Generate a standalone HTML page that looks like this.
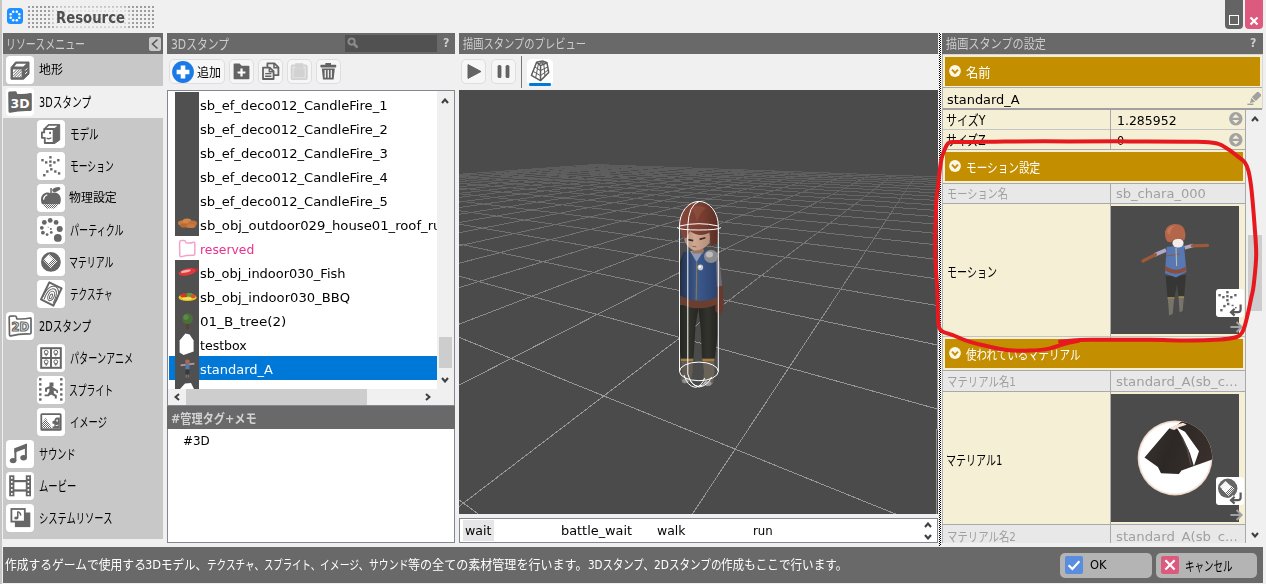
<!DOCTYPE html>
<html lang="ja"><head><meta charset="utf-8"><title>Resource</title>
<style>
html,body{margin:0;padding:0;}
body{width:1266px;height:584px;overflow:hidden;background:#f0f0f0;position:relative;font-family:"DejaVu Sans","Liberation Sans","Noto Sans CJK JP",sans-serif;}
#app{position:absolute;left:0;top:0;width:1266px;height:584px;overflow:hidden;}
#app div,#app svg,#app span.t{position:absolute;}
span.t{white-space:nowrap;transform-origin:0 50%;line-height:20px;height:20px;display:block;}
</style></head>
<body>
<div id="app"><svg width="0" height="0" style="left:0;top:0"><defs><pattern id="hatch" width="2" height="2" patternUnits="userSpaceOnUse"><rect width="1" height="1" fill="#666"/><rect x="1" y="1" width="1" height="1" fill="#666"/></pattern><pattern id="hw" width="2" height="2" patternUnits="userSpaceOnUse"><rect width="1" height="1" fill="#fff"/><rect x="1" y="1" width="1" height="1" fill="#fff"/></pattern><pattern id="chk" width="2" height="2" patternUnits="userSpaceOnUse"><rect width="1" height="1" fill="#000"/><rect x="1" y="1" width="1" height="1" fill="#000"/></pattern></defs></svg>
<div style="left:0px;top:0px;width:2px;height:584px;background:#c6c6c6;"></div><svg style="left:7px;top:8px" width="16" height="16" viewBox="0 0 16 16"><rect x="0" y="0" width="16" height="16" rx="3.5" fill="#1e90ff"/><circle cx="12.34" cy="9.80" r="1.25" fill="#fff"/><circle cx="9.80" cy="12.34" r="1.25" fill="#fff"/><circle cx="6.20" cy="12.34" r="1.25" fill="#fff"/><circle cx="3.66" cy="9.80" r="1.25" fill="#fff"/><circle cx="3.66" cy="6.20" r="1.25" fill="#fff"/><circle cx="6.20" cy="3.66" r="1.25" fill="#fff"/><circle cx="9.80" cy="3.66" r="1.25" fill="#fff"/><circle cx="12.34" cy="6.20" r="1.25" fill="#fff"/></svg>
<div style="left:27px;top:5px;width:127px;height:23px;background:transparent;background-image:radial-gradient(circle,#9c9c9c 0.9px,rgba(156,156,156,0) 1.25px);background-size:4px 4px;background-position:0 0;"></div>
<div style="left:54px;top:9px;width:73px;height:17px;background:rgba(240,240,240,.82);border-radius:6px;box-shadow:0 0 4px 3px rgba(240,240,240,.82);"></div><span class="t" style="left:56px;top:8.1px;font-size:16px;color:#505050;font-weight:bold;transform:scaleX(0.8282);font-family:"Liberation Sans",sans-serif;letter-spacing:-0.3px;">Resource</span>
<div style="left:1225px;top:0px;width:18px;height:29px;background:#646464;border-radius:0 0 4px 4px;"></div>
<div style="left:1229px;top:15px;width:8px;height:8px;background:transparent;border:1px solid #fff;"></div>
<div style="left:1245px;top:0px;width:18px;height:29px;background:#dc5a7d;border-radius:0 0 4px 4px;"></div><svg style="left:1249px;top:16px" width="10" height="10" viewBox="0 0 10 10"><path d="M1.5 1.5L8.5 8.5M8.5 1.5L1.5 8.5" stroke="#fff" stroke-width="2.2" stroke-linecap="butt"/></svg>
<div style="left:3px;top:33px;width:160px;height:21px;background:#696969;"></div>
<div style="left:167px;top:33px;width:288px;height:21px;background:#696969;"></div>
<div style="left:459px;top:33px;width:479px;height:21px;background:#696969;"></div>
<div style="left:942px;top:33px;width:321px;height:21px;background:#696969;"></div><span class="t" style="left:6px;top:34.0px;font-size:13.5px;color:#cdcdcd;transform:scaleX(0.7361);">リソースメニュー</span>
<div style="left:149px;top:37px;width:12px;height:14px;background:#c8c8c8;border-radius:2px;"></div><svg style="left:149px;top:37px" width="12" height="14" viewBox="0 0 12 14"><path d="M8.5 2.5L3.5 7L8.5 11.5" fill="none" stroke="#555" stroke-width="1.6"/></svg><span class="t" style="left:170.5px;top:34.0px;font-size:13.5px;color:#cdcdcd;transform:scaleX(0.7990);">3Dスタンプ</span>
<div style="left:345px;top:35px;width:92px;height:17px;background:#515151;"></div><svg style="left:347px;top:37px" width="12" height="12" viewBox="0 0 12 12"><circle cx="4.6" cy="4.6" r="3.1" fill="none" stroke="#8a8a8a" stroke-width="2"/><path d="M7 7L10.6 10.6" stroke="#8a8a8a" stroke-width="2.6"/></svg><span class="t" style="left:443px;top:33.0px;font-size:13px;color:#cdcdcd;font-weight:bold;transform:scaleX(0.8480);">?</span><span class="t" style="left:462.5px;top:34.0px;font-size:12.6px;color:#cdcdcd;transform:scaleX(0.8159);">描画スタンプのプレビュー</span><span class="t" style="left:945.5px;top:34.0px;font-size:12.6px;color:#cdcdcd;transform:scaleX(0.8852);">描画スタンプの設定</span><span class="t" style="left:1250px;top:33.0px;font-size:13px;color:#cdcdcd;font-weight:bold;transform:scaleX(0.8480);">?</span>
<div style="left:3px;top:54px;width:160px;height:485px;background:#c8c8c8;"></div>
<div style="left:3px;top:86px;width:160px;height:32px;background:#f0f0f0;"></div>
<div style="left:6px;top:56px;width:28px;height:28px;background:#fff;border-radius:4px;"></div><svg style="left:6px;top:56px" width="28" height="28" viewBox="0 0 28 28"><polygon points="5,11.5 9.5,6 23,6 23,18 17.5,23.2 5,23.2" fill="#666" stroke="#666" stroke-width="1" stroke-linejoin="round"/><polygon points="8.3,10.6 10.6,7.8 20.2,7.8 17.2,10.6" fill="#fff"/><rect x="7" y="13.4" width="8.6" height="7.8" fill="#fff"/><path d="M7 17.5L11 13.4M7 20.3L13.8 13.4M8.5 21.2L15.6 14M11.3 21.2L15.6 16.8M14 21.2L15.6 19.6" stroke="#666" stroke-width="1"/><path d="M19.2 14.6L21.2 12.4M19.2 18L21.2 15.8" stroke="#fff" stroke-width="1"/></svg><span class="t" style="left:38.6px;top:60.0px;font-size:12px;color:#000;transform:scaleX(0.9952);">地形</span>
<div style="left:6px;top:88px;width:28px;height:28px;background:#fff;border-radius:4px;"></div><svg style="left:6px;top:88px" width="28" height="28" viewBox="0 0 28 28"><path d="M2.2 5.2Q2 3.4 3.6 3.4L9 3.2Q10.6 3.1 10.8 4.6L11 5.8Q18 6.6 24.4 5Q25.8 4.8 25.8 6.2L25.8 21.6Q25.8 22.8 24.6 23Q14 22.4 4.4 24.8Q2.6 25.2 2.5 23.4Z" fill="#666"/><text x="14" y="19.6" font-family="DejaVu Sans,Liberation Sans,sans-serif" font-weight="bold" font-size="12.5" fill="#fff" text-anchor="middle" textLength="19" lengthAdjust="spacingAndGlyphs">3D</text></svg><span class="t" style="left:38.6px;top:92.0px;font-size:13.5px;color:#000;transform:scaleX(0.7191);">3Dスタンプ</span>
<div style="left:37px;top:120px;width:28px;height:28px;background:#fff;border-radius:4px;"></div><svg style="left:37px;top:120px" width="28" height="28" viewBox="0 0 28 28"><polygon points="6.8,9 11.2,4.6 22.7,4.6 22.7,20 17.2,23.8 17.2,9" fill="#666" stroke="#666" stroke-width="1" stroke-linejoin="round"/><polygon points="9.6,8 12,5.7 20.5,5.7 17.6,8" fill="#fff"/><path d="M7.2 9.2H16.6V23H7.8V17.8H4.9V12.4H7.2Z" fill="#fff" stroke="#666" stroke-width="1.8" stroke-linejoin="round"/><rect x="12.2" y="11.8" width="1.8" height="2.2" fill="#666"/><path d="M9.6 18Q12 19.6 14.4 17.8" fill="none" stroke="#666" stroke-width="1.3"/></svg><span class="t" style="left:69.8px;top:124.0px;font-size:13.5px;color:#000;transform:scaleX(0.7062);">モデル</span>
<div style="left:37px;top:152px;width:28px;height:28px;background:#fff;border-radius:4px;"></div><svg style="left:37px;top:152px" width="28" height="28" viewBox="0 0 28 28"><rect x="12.2" y="4.1" width="2.4" height="2.4" fill="#666"/><rect x="4.3" y="7.0" width="2.4" height="2.4" fill="#666"/><rect x="20.1" y="7.0" width="2.4" height="2.4" fill="#666"/><rect x="8.0" y="9.2" width="2.4" height="2.4" fill="#666"/><rect x="12.2" y="8.4" width="2.4" height="2.4" fill="#666"/><rect x="16.2" y="9.2" width="2.4" height="2.4" fill="#666"/><rect x="12.2" y="12.2" width="2.4" height="2.4" fill="#666"/><rect x="13.1" y="16.1" width="2.4" height="2.4" fill="#666"/><rect x="9.1" y="18.3" width="2.4" height="2.4" fill="#666"/><rect x="17.1" y="18.3" width="2.4" height="2.4" fill="#666"/><rect x="6.1" y="22.0" width="2.4" height="2.4" fill="#666"/><rect x="20.9" y="20.2" width="2.4" height="2.4" fill="#666"/></svg><span class="t" style="left:69.8px;top:156.0px;font-size:13.5px;color:#000;transform:scaleX(0.6500);">モーション</span>
<div style="left:37px;top:184px;width:28px;height:28px;background:#fff;border-radius:4px;"></div><svg style="left:37px;top:184px" width="28" height="28" viewBox="0 0 28 28"><path d="M13.9 9.4C10 7 4 9.5 4 15.5C4 21 8 25 11.5 24.6Q13.9 24 16.3 24.6C20 25 23.8 21 23.8 15.5C23.8 9.5 18 7 13.9 9.4Z" fill="#666"/><rect x="3" y="20.2" width="22" height="5" fill="#fff"/><path d="M6.3 20.2H21.6C20 23.4 17.8 24.9 16.3 24.6Q13.9 24 11.5 24.6C10 24.9 7.8 23.4 6.3 20.2Z" fill="url(#hatch)"/><rect x="13.3" y="4" width="1.5" height="6" fill="#666"/><ellipse cx="19.3" cy="5.4" rx="4.2" ry="2.1" transform="rotate(-18 19.3 5.4)" fill="#666"/><path d="M6.6 15.2Q7 12 9.8 11" fill="none" stroke="#fff" stroke-width="1.3" stroke-linecap="round"/></svg><span class="t" style="left:69px;top:188.0px;font-size:12px;color:#000;transform:scaleX(0.9955);">物理設定</span>
<div style="left:37px;top:216px;width:28px;height:28px;background:#fff;border-radius:4px;"></div><svg style="left:37px;top:216px" width="28" height="28" viewBox="0 0 28 28"><circle cx="7.3" cy="6.4" r="2.4" fill="#666"/><circle cx="13.2" cy="4.4" r="2.4" fill="#666"/><circle cx="19.1" cy="6.4" r="2.4" fill="#666"/><circle cx="22.7" cy="12.9" r="3" fill="#666"/><circle cx="20.8" cy="21.9" r="3.9" fill="#666"/><circle cx="4.8" cy="11.8" r="1.9" fill="#666"/><circle cx="5.9" cy="16.7" r="1.9" fill="#666"/><circle cx="10.1" cy="18.6" r="1.4" fill="#666"/><circle cx="14.3" cy="16.4" r="1.4" fill="#666"/><circle cx="13.9" cy="12.9" r="1" fill="#666"/><circle cx="11.2" cy="11.2" r="0.5" fill="#666"/></svg><span class="t" style="left:69.8px;top:220.0px;font-size:13.5px;color:#000;transform:scaleX(0.6730);">パーティクル</span>
<div style="left:37px;top:248px;width:28px;height:28px;background:#fff;border-radius:4px;"></div><svg style="left:37px;top:248px" width="28" height="28" viewBox="0 0 28 28"><circle cx="13.9" cy="13.9" r="9.9" fill="#666"/><polygon points="11.6,6.6 16,11 11.6,15.4 7.2,11" fill="#fff" opacity=".9"/><polygon points="12,6 20.5,13 14,20.5 6.4,12.4" fill="url(#hw)"/></svg><span class="t" style="left:69px;top:252.0px;font-size:13.5px;color:#000;transform:scaleX(0.6605);">マテリアル</span>
<div style="left:37px;top:280px;width:28px;height:28px;background:#fff;border-radius:4px;"></div><svg style="left:37px;top:280px" width="28" height="28" viewBox="0 0 28 28"><polygon points="12.3,2.4 24.6,8.4 16.4,25.6 4,19.4" fill="#fff" stroke="#666" stroke-width="2" stroke-linejoin="round"/><g fill="none" stroke="#666" stroke-width="1" transform="rotate(25 14.6 15)"><ellipse cx="14.6" cy="16.5" rx="1.2" ry="2.6"/><ellipse cx="14.6" cy="16" rx="3" ry="5"/><path d="M9.6 22C8.6 12 12 8.4 14.6 8.4C17.4 8.4 20 12 19.4 22"/><path d="M7.6 20C7 10 11 5.8 14.6 5.8C18 5.8 22 10 21.4 19"/></g></svg><span class="t" style="left:69.8px;top:284.0px;font-size:13.5px;color:#000;transform:scaleX(0.6361);">テクスチャ</span>
<div style="left:6px;top:312px;width:28px;height:28px;background:#fff;border-radius:4px;"></div><svg style="left:6px;top:312px" width="28" height="28" viewBox="0 0 28 28"><path d="M3.2 5.4Q3 4.2 4.4 4.2L9 4Q10.2 3.9 10.4 5L10.8 6.8Q18 7.4 24 6Q25 5.8 25 7L25 20.8Q25 21.8 24 22Q14 21.6 5 23.8Q3.6 24.1 3.5 22.8Z" fill="#fff" stroke="#666" stroke-width="1.7" stroke-linejoin="round"/><text x="14.2" y="19.4" font-family="DejaVu Sans,Liberation Sans,sans-serif" font-weight="bold" font-size="11.5" fill="#fff" stroke="#666" stroke-width="1.15" text-anchor="middle" textLength="17.5" lengthAdjust="spacingAndGlyphs">2D</text></svg><span class="t" style="left:38.6px;top:316.0px;font-size:13.5px;color:#000;transform:scaleX(0.7191);">2Dスタンプ</span>
<div style="left:37px;top:344px;width:28px;height:28px;background:#fff;border-radius:4px;"></div><svg style="left:37px;top:344px" width="28" height="28" viewBox="0 0 28 28"><rect x="4.2" y="4.2" width="19.6" height="19.6" fill="#fff" stroke="#666" stroke-width="2"/><path d="M14 4V24M4 14H24" stroke="#666" stroke-width="2"/><circle cx="9.2" cy="8.2" r="1.9" fill="none" stroke="#666" stroke-width="1"/><path d="M7.6 10.399999999999999H10.799999999999999M9.2 10.2V12.2" stroke="#666" stroke-width="1"/><circle cx="18.8" cy="8.2" r="1.9" fill="none" stroke="#666" stroke-width="1"/><path d="M17.2 10.399999999999999H20.400000000000002M18.8 10.2V12.2" stroke="#666" stroke-width="1"/><circle cx="9.2" cy="17.8" r="1.9" fill="none" stroke="#666" stroke-width="1"/><path d="M7.6 20.0H10.799999999999999M9.2 19.8V21.8" stroke="#666" stroke-width="1"/><circle cx="18.8" cy="17.8" r="1.9" fill="none" stroke="#666" stroke-width="1"/><path d="M17.2 20.0H20.400000000000002M18.8 19.8V21.8" stroke="#666" stroke-width="1"/></svg><span class="t" style="left:69.8px;top:348.0px;font-size:13.5px;color:#000;transform:scaleX(0.6755);">パターンアニメ</span>
<div style="left:37px;top:376px;width:28px;height:28px;background:#fff;border-radius:4px;"></div><svg style="left:37px;top:376px" width="28" height="28" viewBox="0 0 28 28"><rect x="2.1" y="2.1" width="2.4" height="2.4" fill="#666"/><rect x="2.1" y="7.2" width="2.4" height="2.4" fill="#666"/><rect x="2.1" y="12.2" width="2.4" height="2.4" fill="#666"/><rect x="2.1" y="17.3" width="2.4" height="2.4" fill="#666"/><rect x="2.1" y="22.3" width="2.4" height="2.4" fill="#666"/><rect x="23.1" y="2.1" width="2.4" height="2.4" fill="#666"/><rect x="23.1" y="7.2" width="2.4" height="2.4" fill="#666"/><rect x="23.1" y="12.2" width="2.4" height="2.4" fill="#666"/><rect x="23.1" y="17.3" width="2.4" height="2.4" fill="#666"/><rect x="23.1" y="22.3" width="2.4" height="2.4" fill="#666"/><path d="M12.5 6.5H16.5V10.5H14.8L18 12.5L21 14.5V17H19.4V15.6L16.8 14.6V17.5L19.8 19.2V22.4H17.8V20.4L14 18.6L11.6 20.2H7.6V18.4H10.6L12.4 15.6V12.4L10 13.4V15.8H8V12L12.5 10.2Z" fill="#666"/></svg><span class="t" style="left:69px;top:380.0px;font-size:13.5px;color:#000;transform:scaleX(0.6519);">スプライト</span>
<div style="left:37px;top:408px;width:28px;height:28px;background:#fff;border-radius:4px;"></div><svg style="left:37px;top:408px" width="28" height="28" viewBox="0 0 28 28"><rect x="3.4" y="5.2" width="21.2" height="17.6" rx="1.6" fill="#666"/><rect x="5.2" y="7" width="17.6" height="13.4" fill="#fff"/><polygon points="5.2,20.4 5.2,14.5 8.6,10 15.4,20.4" fill="url(#hatch)"/><path d="M22.8 9.4H19.6Q17.6 10 17.4 12.4L15.4 13.4V15.6L17.4 16V18.4H15.6V20.4H22.8Z" fill="#666"/><rect x="19.4" y="11.6" width="1.4" height="2" fill="#fff"/><path d="M18.6 17.4Q20 18 21.4 17" stroke="#fff" stroke-width=".9" fill="none"/></svg><span class="t" style="left:69.8px;top:412.0px;font-size:13.5px;color:#000;transform:scaleX(0.6886);">イメージ</span>
<div style="left:6px;top:440px;width:28px;height:28px;background:#fff;border-radius:4px;"></div><svg style="left:6px;top:440px" width="28" height="28" viewBox="0 0 28 28"><ellipse cx="7.1" cy="20.6" rx="3.3" ry="2.7" fill="#666"/><ellipse cx="17.6" cy="17.8" rx="3.3" ry="2.7" fill="#666"/><rect x="8.4" y="8.6" width="2" height="12" fill="#666"/><rect x="18.9" y="4" width="2" height="14" fill="#666"/><polygon points="8.4,8.2 20.9,3.4 20.9,8 8.4,12.8" fill="#666"/></svg><span class="t" style="left:38.6px;top:444.0px;font-size:13.5px;color:#000;transform:scaleX(0.6778);">サウンド</span>
<div style="left:6px;top:472px;width:28px;height:28px;background:#fff;border-radius:4px;"></div><svg style="left:6px;top:472px" width="28" height="28" viewBox="0 0 28 28"><rect x="3.2" y="3.3" width="5.2" height="21" fill="#666"/><rect x="19.8" y="3.3" width="5.2" height="21" fill="#666"/><rect x="8" y="8" width="12" height="2.2" fill="#666"/><rect x="8" y="17.4" width="12" height="2.2" fill="#666"/><rect x="5" y="5" width="1.6" height="1.8" fill="#fff"/><rect x="21.6" y="5" width="1.6" height="1.8" fill="#fff"/><rect x="5" y="9" width="1.6" height="1.8" fill="#fff"/><rect x="21.6" y="9" width="1.6" height="1.8" fill="#fff"/><rect x="5" y="13" width="1.6" height="1.8" fill="#fff"/><rect x="21.6" y="13" width="1.6" height="1.8" fill="#fff"/><rect x="5" y="17" width="1.6" height="1.8" fill="#fff"/><rect x="21.6" y="17" width="1.6" height="1.8" fill="#fff"/><rect x="5" y="21" width="1.6" height="1.8" fill="#fff"/><rect x="21.6" y="21" width="1.6" height="1.8" fill="#fff"/></svg><span class="t" style="left:38.6px;top:476.0px;font-size:13.5px;color:#000;transform:scaleX(0.6926);">ムービー</span>
<div style="left:6px;top:504px;width:28px;height:28px;background:#fff;border-radius:4px;"></div><svg style="left:6px;top:504px" width="28" height="28" viewBox="0 0 28 28"><rect x="8.9" y="8.5" width="15.4" height="14.6" fill="#666"/><rect x="5.4" y="5" width="13.4" height="12.6" fill="#fff" stroke="#666" stroke-width="1.8"/><ellipse cx="10.2" cy="14" rx="2" ry="1.6" fill="#666"/><rect x="11" y="7.6" width="1.5" height="6.6" fill="#666"/><path d="M11.6 7.6Q15 8.6 14.6 11.6" fill="none" stroke="#666" stroke-width="1.5"/></svg><span class="t" style="left:38.6px;top:508.0px;font-size:13.5px;color:#000;transform:scaleX(0.6865);">システムリソース</span>
<div style="left:169px;top:59px;width:56px;height:25px;background:#f5f5f5;background:#f6f6f6;border:1px solid #dedede;border-radius:5px;box-sizing:border-box;"></div><svg style="left:172px;top:61px" width="22" height="22" viewBox="0 0 22 22"><circle cx="11" cy="11" r="10.9" fill="#1a7ae6"/><path d="M11 4.6V17.4M4.6 11H17.4" stroke="#fff" stroke-width="4.6"/></svg><span class="t" style="left:197px;top:63.0px;font-size:12px;color:#000;transform:scaleX(0.9993);">追加</span>
<div style="left:229px;top:59px;width:25px;height:25px;background:#f5f5f5;background:#f6f6f6;border:1px solid #dedede;border-radius:5px;box-sizing:border-box;"></div><svg style="left:229.4px;top:59.4px" width="25" height="25" viewBox="0 0 25 25"><path d="M4.6 5.4Q4.6 4.6 5.4 4.6H10.6L12.6 6.8H19.6Q20.4 6.8 20.4 7.6V19.4Q20.4 20.2 19.6 20.2H5.4Q4.6 20.2 4.6 19.4Z" fill="#636363"/><path d="M12.5 9.6V17.4M8.6 13.5H16.4" stroke="#fff" stroke-width="2.2"/></svg>
<div style="left:258px;top:59px;width:25px;height:25px;background:#f5f5f5;background:#f6f6f6;border:1px solid #dedede;border-radius:5px;box-sizing:border-box;"></div><svg style="left:258.4px;top:59.4px" width="25" height="25" viewBox="0 0 25 25"><path d="M9.4 4.4H16.4L20.4 8.4V16.2H9.4Z" fill="#f0f0f0" stroke="#636363" stroke-width="1.8" stroke-linejoin="round"/><path d="M16 4.6V8.8H20.2" fill="none" stroke="#636363" stroke-width="1.6"/><path d="M5 8.6H11.8L15.6 12.4V20H5Z" fill="#f0f0f0" stroke="#636363" stroke-width="1.8" stroke-linejoin="round"/><path d="M11.4 8.8V12.8H15.4" fill="none" stroke="#636363" stroke-width="1.6"/><path d="M7.2 14.6H13.4M7.2 17.2H13.4" stroke="#636363" stroke-width="1.4"/></svg>
<div style="left:287px;top:59px;width:25px;height:25px;background:#f5f5f5;background:#f6f6f6;border:1px solid #dedede;border-radius:5px;box-sizing:border-box;"></div><svg style="left:287.4px;top:59.4px" width="25" height="25" viewBox="0 0 25 25"><rect x="4.6" y="6.4" width="15.2" height="13.8" rx="1" fill="#e2e2e2" stroke="#d2d2d2" stroke-width="1.8"/><rect x="8.2" y="4.2" width="8" height="5" fill="#d2d2d2"/><rect x="6.8" y="9.4" width="10.8" height="8.8" fill="#d2d2d2"/></svg>
<div style="left:316px;top:59px;width:25px;height:25px;background:#f5f5f5;background:#f6f6f6;border:1px solid #dedede;border-radius:5px;box-sizing:border-box;"></div><svg style="left:316.4px;top:59.4px" width="25" height="25" viewBox="0 0 25 25"><rect x="9.4" y="4" width="5.6" height="2.4" fill="#636363"/><rect x="4.4" y="5.8" width="15.8" height="2.6" rx=".6" fill="#636363"/><path d="M5.8 9.6H18.8L17.6 20.4H7Z" fill="#636363"/><path d="M9.3 11V18.8M12.3 11V18.8M15.3 11V18.8" stroke="#f0f0f0" stroke-width="1.3"/></svg>
<div style="left:167px;top:90px;width:288px;height:316px;background:#fff;border:1px solid #828790;box-sizing:border-box;"></div>
<div style="left:175px;top:92px;width:24px;height:144px;background:#505050;"></div>
<div style="left:175px;top:260px;width:24px;height:129px;background:#505050;"></div>
<div style="left:169px;top:356px;width:268px;height:24px;background:#0078d7;"></div>
<div style="left:175px;top:356px;width:24px;height:24px;background:#505050;"></div>
<div style="left:168px;top:91px;width:268.5px;height:298px;overflow:hidden;"><span class="t" style="left:32px;top:4.5px;font-size:13px;color:#000;transform:scaleX(1.0060);">sb_ef_deco012_CandleFire_1</span><span class="t" style="left:32px;top:28.5px;font-size:13px;color:#000;transform:scaleX(1.0076);">sb_ef_deco012_CandleFire_2</span><span class="t" style="left:32px;top:52.5px;font-size:13px;color:#000;transform:scaleX(1.0076);">sb_ef_deco012_CandleFire_3</span><span class="t" style="left:32px;top:76.5px;font-size:13px;color:#000;transform:scaleX(1.0076);">sb_ef_deco012_CandleFire_4</span><span class="t" style="left:32px;top:100.5px;font-size:13px;color:#000;transform:scaleX(1.0076);">sb_ef_deco012_CandleFire_5</span><span class="t" style="left:32px;top:124.5px;font-size:13px;color:#000;transform:scaleX(1.0154);">sb_obj_outdoor029_house01_roof_ru</span><span class="t" style="left:32px;top:148.5px;font-size:13px;color:#e8308c;transform:scaleX(0.9505);">reserved</span><span class="t" style="left:32px;top:172.5px;font-size:13px;color:#000;transform:scaleX(0.9988);">sb_obj_indoor030_Fish</span><span class="t" style="left:32px;top:196.5px;font-size:13px;color:#000;transform:scaleX(1.0095);">sb_obj_indoor030_BBQ</span><span class="t" style="left:32px;top:220.5px;font-size:13px;color:#000;transform:scaleX(1.0406);">01_B_tree(2)</span><span class="t" style="left:32px;top:244.5px;font-size:13px;color:#000;transform:scaleX(0.9656);">testbox</span><span class="t" style="left:32px;top:268.5px;font-size:13px;color:#fff;transform:scaleX(0.9991);">standard_A</span></div><svg style="left:175px;top:91px" width="24" height="298" viewBox="0 0 24 298"><g transform="translate(0 121)"><ellipse cx="7" cy="11" rx="4" ry="2.6" fill="#c87a40"/><ellipse cx="12" cy="9.6" rx="4.6" ry="3" fill="#d08848"/><ellipse cx="17.6" cy="11.4" rx="4.4" ry="2.8" fill="#c07038"/><ellipse cx="10" cy="13.4" rx="5" ry="2.2" fill="#b86a34"/><ellipse cx="16" cy="14" rx="4.6" ry="2" fill="#c87a40"/></g><g transform="translate(0 169) rotate(-12 12 12)"><ellipse cx="12.4" cy="12" rx="9" ry="3.4" fill="#e23a3a"/><ellipse cx="11" cy="11" rx="5" ry="1.2" fill="#f7b0b0"/><polygon points="20,12 23.4,9.4 23,14" fill="#c82c2c"/></g><g transform="translate(0 193)"><ellipse cx="12.6" cy="13.4" rx="9" ry="3.6" fill="#e8c81e"/><ellipse cx="9" cy="11.4" rx="3.6" ry="2.2" fill="#c83c28"/><ellipse cx="14.6" cy="10.8" rx="3" ry="2" fill="#58a03c"/><ellipse cx="18" cy="12.4" rx="2.6" ry="1.8" fill="#d85030"/><ellipse cx="12" cy="14.6" rx="5" ry="1.4" fill="#f4e060"/></g><g transform="translate(0 217)"><rect x="11.4" y="15" width="2.2" height="6.4" fill="#5e4228"/><circle cx="12.6" cy="10.6" r="5.4" fill="#4a7038"/><circle cx="11" cy="9.2" r="2.6" fill="#5c8a46"/></g><g transform="translate(0 241)"><polygon points="4.6,8.6 10.4,1.6 14.6,2.4 18.6,8.6 18.6,19.6 8.6,23 4.6,20.6" fill="#fff"/></g><g transform="translate(0 265)"><ellipse cx="12.4" cy="5.6" rx="2.4" ry="2.2" fill="#b06848"/><path d="M5.6 9.4L19.4 7.6" stroke="#b89a98" stroke-width="1.8"/><rect x="10.4" y="7.6" width="4" height="6" fill="#5878b0"/><rect x="10.4" y="13.4" width="4" height="5.4" fill="#3a3a38"/><rect x="10.6" y="18.6" width="1.4" height="3" fill="#77736a"/><rect x="12.8" y="18.6" width="1.4" height="3" fill="#77736a"/></g><g transform="translate(0 289)"><polygon points="5,9 10,3.4 16,3 19,9" fill="#fff"/></g></svg><svg style="left:176px;top:237px" width="22" height="22" viewBox="0 0 22 22"><path d="M3.6 5.4Q3.6 3.6 5.2 3.6H8Q9.2 3.6 9.6 4.8L10 5.8Q14 6.4 17.6 5.2Q18.8 5 18.8 6.2V17Q18.8 18 17.8 18.2Q11 18 5.4 19.6Q3.8 20 3.8 18.4Z" fill="#fff" stroke="#f4a2cc" stroke-width="1.5" stroke-linejoin="round"/></svg>
<div style="left:437px;top:91px;width:17px;height:298px;background:#f0f0f0;"></div>
<div style="left:438.5px;top:337px;width:13px;height:31px;background:#cdcdcd;"></div><svg style="left:441px;top:98px" width="8" height="6" viewBox="0 0 8 6"><path d="M1 5L4.0 1.5L7 5" fill="none" stroke="#404040" stroke-width="2.1"/></svg><svg style="left:441px;top:376.5px" width="8" height="6" viewBox="0 0 8 6"><path d="M1 1L4.0 4.5L7 1" fill="none" stroke="#404040" stroke-width="2.1"/></svg>
<div style="left:168px;top:389px;width:286px;height:16px;background:#f0f0f0;"></div>
<div style="left:186px;top:389px;width:181px;height:15.5px;background:#cdcdcd;"></div><svg style="left:173.5px;top:392.5px" width="6" height="8" viewBox="0 0 6 8"><path d="M5 1L1.5 4.0L5 7" fill="none" stroke="#404040" stroke-width="2.1"/></svg><svg style="left:424.5px;top:392.5px" width="6" height="8" viewBox="0 0 6 8"><path d="M1 1L4.5 4.0L1 7" fill="none" stroke="#404040" stroke-width="2.1"/></svg>
<div style="left:167px;top:406px;width:288px;height:23px;background:#696969;"></div><span class="t" style="left:171.3px;top:408.5px;font-size:12.6px;color:#d2d2d2;font-weight:bold;transform:scaleX(0.8865);">#管理タグ+メモ</span>
<div style="left:167px;top:429px;width:288px;height:114px;background:#fff;border:1px solid #828790;border-top:none;box-sizing:border-box;"></div><span class="t" style="left:183px;top:430.5px;font-size:13px;color:#000;transform:scaleX(0.9182);">#3D</span>
<div style="left:461px;top:59px;width:25px;height:25px;background:#f5f5f5;background:#f6f6f6;border:1px solid #dedede;border-radius:5px;box-sizing:border-box;"></div><svg style="left:461.4px;top:59.4px" width="25" height="25" viewBox="0 0 25 25"><polygon points="7,5.6 20,12.5 7,19.4" fill="#636363" stroke="#636363" stroke-width="1" stroke-linejoin="round"/></svg>
<div style="left:491px;top:59px;width:25px;height:25px;background:#f5f5f5;background:#f6f6f6;border:1px solid #dedede;border-radius:5px;box-sizing:border-box;"></div><svg style="left:491.3px;top:59.4px" width="25" height="25" viewBox="0 0 25 25"><rect x="6.6" y="6" width="3.8" height="13" rx="1.6" fill="#636363"/><rect x="14.6" y="6" width="3.8" height="13" rx="1.6" fill="#636363"/></svg>
<div style="left:520.8px;top:56px;width:1.3px;height:32px;background:#777;"></div>
<div style="left:527px;top:59px;width:26px;height:27px;background:#fff;border-radius:5px;"></div>
<div style="left:528.8px;top:83.4px;width:22.6px;height:2.4px;background:#0078d7;border-radius:1.2px;"></div><svg style="left:527px;top:59px" width="26" height="27" viewBox="0 0 26 27"><g fill="none" stroke="#5c5c5c" stroke-width="1.5" stroke-linejoin="round"><polygon points="9.6,3.2 15.6,1.9 20,3.8 21.7,13.5 13.5,21.6 4.4,16.4"/><path d="M9.6 3.2L13.6 6.6L20 3.8M13.6 6.6L13.5 21.6"/></g><g fill="none" stroke="#5c5c5c" stroke-width="1"><path d="M7.8 8L13.6 11.6L20.6 8M6.2 12.4L13.5 16.6L21.2 11"/><path d="M11.4 5L8.6 19M16.8 5.2L18 17.2M12.6 2.6L16.8 5.2M17.8 2.9L11.4 5"/></g></svg><svg style="left:459px;top:90px" width="479" height="424" viewBox="0 0 479 424"><rect width="479" height="424" fill="#4b4b4b"/><defs><linearGradient id="fade" x1="0" y1="0" x2="0" y2="1"><stop offset="0" stop-color="#4b4b4b" stop-opacity=".8"/><stop offset=".1" stop-color="#4b4b4b" stop-opacity=".72"/><stop offset=".3" stop-color="#4b4b4b" stop-opacity=".55"/><stop offset=".55" stop-color="#4b4b4b" stop-opacity=".36"/><stop offset=".8" stop-color="#4b4b4b" stop-opacity=".16"/><stop offset="1" stop-color="#4b4b4b" stop-opacity="0"/></linearGradient></defs><g stroke="#969696" stroke-width="1" fill="none" shape-rendering="crispEdges"><path d="M-594.9 127.2L135.9 74.5"/><path d="M-590.9 130.4L146.1 74.8"/><path d="M-596.9 134.8L156.7 75.2"/><path d="M-592.6 138.8L167.6 75.6"/><path d="M-599.4 144.2L178.9 76.0"/><path d="M-594.7 149.1L190.6 76.4"/><path d="M-589.4 154.7L202.7 76.9"/><path d="M-597.4 162.3L215.3 77.3"/><path d="M-591.5 169.5L228.3 77.8"/><path d="M-584.8 177.7L241.8 78.3"/><path d="M-594.3 189.4L255.9 78.8"/><path d="M-586.6 200.7L270.5 79.3"/><path d="M-598.2 217.4L285.7 79.9"/><path d="M-589.2 234.1L301.6 80.5"/><path d="M-578.2 254.7L318.1 81.1"/><path d="M-593.3 286.9L335.3 81.7"/><path d="M-579.2 322.3L353.2 82.3"/><path d="M-560.1 370.3L372.0 83.0"/><path d="M-545.4 123.6L-599.3 185.1"/><path d="M-581.3 457.7L391.6 83.7"/><path d="M-467.3 118.0L-196.6 1279.3"/><path d="M-550.4 576.4L412.2 84.5"/><path d="M-400.2 113.1L972.5 1130.8"/><path d="M-587.7 865.4L433.7 85.3"/><path d="M-342.1 108.9L1061.4 676.9"/><path d="M-356.9 1318.7L456.3 86.1"/><path d="M-291.1 105.2L1050.5 478.0"/><path d="M470.4 1264.5L480.1 86.9"/><path d="M-246.1 102.0L1044.8 374.7"/><path d="M1069.3 962.0L505.0 87.8"/><path d="M-206.0 99.1L1069.8 316.3"/><path d="M1071.2 503.6L531.4 88.8"/><path d="M-170.1 96.5L1062.7 272.1"/><path d="M1071.8 351.5L559.1 89.8"/><path d="M-137.8 94.2L1078.5 242.9"/><path d="M1072.1 275.5L588.4 90.9"/><path d="M-108.6 92.1L1072.0 218.5"/><path d="M1072.3 230.0L619.4 92.0"/><path d="M-82.0 90.2L1067.0 199.5"/><path d="M1072.4 199.6L652.3 93.2"/><path d="M-57.7 88.4L1077.8 185.6"/><path d="M1072.5 178.0L687.2 94.4"/><path d="M-35.4 86.8L1073.1 173.0"/><path d="M1072.6 161.7L724.3 95.8"/><path d="M-14.9 85.3L1069.2 162.5"/><path d="M1072.6 149.1L763.8 97.2"/><path d="M4.1 84.0L1077.4 154.4"/><path d="M1072.7 139.0L806.0 98.8"/><path d="M21.6 82.7L1073.7 146.7"/><path d="M1078.6 131.5L851.1 100.4"/><path d="M37.9 81.5L1070.5 140.0"/><path d="M1078.1 124.5L899.6 102.1"/><path d="M53.1 80.4L1077.1 134.7"/><path d="M1077.7 118.6L951.7 104.0"/><path d="M67.3 79.4L1074.1 129.5"/><path d="M1077.4 113.5L1007.8 106.1"/><path d="M80.6 78.4L1071.4 124.9"/><path d="M1077.1 109.1L1068.6 108.3"/><path d="M93.0 77.5L1076.9 121.2"/><path d="M104.7 76.7L1074.4 117.4"/><path d="M115.7 75.9L1072.1 114.1"/><path d="M126.1 75.2L1076.8 111.3"/><path d="M135.9 74.5L1074.6 108.5"/></g><rect x="0" y="70" width="479" height="190" fill="url(#fade)"/><g transform="translate(-459 -90)"><defs><linearGradient id="hairg" x1="0" x2="1"><stop offset="0" stop-color="#84463a"/><stop offset=".55" stop-color="#7a3e30"/><stop offset="1" stop-color="#5a2e26"/></linearGradient><linearGradient id="vestg" x1="0" x2="1"><stop offset="0" stop-color="#22324f"/><stop offset=".45" stop-color="#3d5a8e"/><stop offset="1" stop-color="#2b426e"/></linearGradient><linearGradient id="pantg" x1="0" x2="1"><stop offset="0" stop-color="#24241f"/><stop offset=".5" stop-color="#33332d"/><stop offset="1" stop-color="#252520"/></linearGradient><linearGradient id="faceg" x1="0" x2="1"><stop offset="0" stop-color="#a98672"/><stop offset=".4" stop-color="#cfa892"/><stop offset="1" stop-color="#b48c78"/></linearGradient></defs><path d="M683 254L679.8 262L679.2 298L683.6 300Z" fill="#2c2a30"/><path d="M679.5 305L699 305L695.6 326L693.6 358L680.6 358L678.6 335Z" fill="url(#pantg)"/><path d="M698 305L717.6 303L717.6 335L715 358L702 358L700.8 330Z" fill="url(#pantg)"/><path d="M681 359L693 359L692.6 372L691 381L684.4 384L680.6 380L682.6 372Z" fill="#625b52"/><path d="M702.5 359L714 359L714.6 372L713 384L706.4 386.4L703 382L704 372Z" fill="#6a635a"/><path d="M681 360H693M702.5 360H714.2" stroke="#b07c34" stroke-width="2.2"/><ellipse cx="685.4" cy="381" rx="3.4" ry="2.2" fill="#8c8c90"/><ellipse cx="708" cy="383.6" rx="3.6" ry="2.4" fill="#98989c"/><path d="M711 256L719.6 261L722.4 288L715.4 290Z" fill="#6f6a74"/><path d="M715.4 287L722.6 285.6L723.8 308L720 315L715.4 311Z" fill="#69392b"/><path d="M683 252L710 250L716 262L717.4 300L686 304L680.2 298L681.6 262Z" fill="url(#vestg)"/><path d="M690 251L696.6 262L704 250Z" fill="#8e9cb8"/><path d="M696.8 262L696.2 300" stroke="#8a7a4a" stroke-width="1.1"/><path d="M680.2 295.6Q698 305.6 717.5 297L717.6 304Q698 313 680.4 303.4Z" fill="#6b3f30"/><ellipse cx="711" cy="256.4" rx="7" ry="6.6" fill="#8c8c90"/><ellipse cx="709.4" cy="254.4" rx="3.6" ry="3" fill="#bcbcc0"/><circle cx="700.4" cy="267.4" r="2.8" fill="#c4c8d0"/><circle cx="699.8" cy="266.8" r="1.2" fill="#fff"/><rect x="692.4" y="245" width="11" height="8.4" fill="#9c7662"/><path d="M683.6 228L684.6 241Q688 249 695 250.6Q704 250 709.6 243L710.4 228Z" fill="url(#faceg)"/><path d="M688 239.6L693.2 240.6M699.6 239.4L705.4 237.8" stroke="#3e2822" stroke-width="1.7"/><path d="M692.6 246.4L696.4 246.8" stroke="#8a5c4c" stroke-width="1"/><path d="M680 228C679 210 688 202.6 699 202.6C711 202.6 719.4 212 718.6 228L717 243.6L711.4 246.4L709.4 232.6C703 236.6 694 235 690 231L686.4 238L682.4 237.6Z" fill="url(#hairg)"/><path d="M690 208Q698 204 706 208Q700 212 697 222Q695 212 690 208Z" fill="#8e5040" opacity=".7"/><g fill="none" stroke="#fff" stroke-width="1"><path d="M679.5 226V371.6M687.8 226V374M718.3 226V371.6"/><path d="M677 227.6Q680 230 698.9 230Q718 230 721 227.6M679.5 226Q698.9 221.4 718.3 226"/><path d="M679.5 226A19.4 24.6 0 0 1 718.3 226"/><path d="M687.8 226Q688.6 205 698.9 201.6"/><ellipse cx="698.9" cy="371.4" rx="19.4" ry="9.3"/><path d="M684 375Q687 386 695.4 387.4Q702 386 704.6 378"/><path d="M687.8 374Q691 386 699 387Q707.6 386 711.6 377"/><path d="M690 380.6Q698 392 706.6 381"/></g></g></svg>
<div style="left:459px;top:518px;width:479px;height:25px;background:#fff;border:1px solid #828790;box-sizing:border-box;"></div>
<div style="left:463px;top:520px;width:30.5px;height:20.5px;background:#e6e6e6;"></div><span class="t" style="left:465px;top:521.2px;font-size:13px;color:#000;transform:scaleX(0.9703);">wait</span><span class="t" style="left:561.4px;top:521.2px;font-size:13px;color:#000;transform:scaleX(0.9896);">battle_wait</span><span class="t" style="left:657.3px;top:521.2px;font-size:13px;color:#000;transform:scaleX(0.9580);">walk</span><span class="t" style="left:753.3px;top:521.2px;font-size:13px;color:#000;transform:scaleX(0.9025);">run</span><svg style="left:923.5px;top:521.5px" width="8" height="6" viewBox="0 0 8 6"><path d="M1 5L4.0 1.5L7 5" fill="none" stroke="#404040" stroke-width="2.1"/></svg><svg style="left:923.5px;top:533.5px" width="8" height="6" viewBox="0 0 8 6"><path d="M1 1L4.0 4.5L7 1" fill="none" stroke="#404040" stroke-width="2.1"/></svg><svg style="left:939px;top:33px" width="2" height="513" viewBox="0 0 2 513"><rect width="2" height="513" fill="#fff"/><rect width="2" height="513" fill="url(#chk)"/></svg>
<div style="left:3px;top:547px;width:1260px;height:35.5px;background:#696969;"></div><span class="t" style="left:4.5px;top:555.0px;font-size:12.6px;color:#fff;transform:scaleX(0.9347);">作成するゲームで使用する</span><span class="t" style="left:145.4px;top:555.0px;font-size:12.6px;color:#fff;transform:scaleX(0.9090);">3Dモデル、</span><span class="t" style="left:207.3px;top:555.0px;font-size:12.6px;color:#fff;transform:scaleX(0.7632);">テクスチャ、</span><span class="t" style="left:264.4px;top:555.0px;font-size:12.6px;color:#fff;transform:scaleX(0.7436);">スプライト、</span><span class="t" style="left:320.4px;top:555.0px;font-size:12.6px;color:#fff;transform:scaleX(0.7795);">イメージ、</span><span class="t" style="left:369.0px;top:555.0px;font-size:12.6px;color:#fff;transform:scaleX(0.7801);">サウンド</span><span class="t" style="left:408.29999999999995px;top:555.0px;font-size:12.6px;color:#fff;transform:scaleX(0.9565);">等の全ての素材管理を行います。</span><span class="t" style="left:587.8px;top:555.0px;font-size:12.6px;color:#fff;transform:scaleX(0.8231);">3Dスタンプ、</span><span class="t" style="left:653.6px;top:555.0px;font-size:12.6px;color:#fff;transform:scaleX(0.8405);">2Dスタンプの</span><span class="t" style="left:721.1px;top:555.0px;font-size:12.6px;color:#fff;transform:scaleX(0.9200);">作成もここで行います。</span>
<div style="left:1060px;top:552.5px;width:92px;height:25px;background:#b4b4b4;border-radius:5px;"></div>
<div style="left:1155.5px;top:552.5px;width:101.5px;height:25px;background:#b4b4b4;border-radius:5px;"></div>
<div style="left:1065px;top:556px;width:17.5px;height:17.5px;background:#5a8de0;border-radius:2px;"></div><svg style="left:1065px;top:556px" width="18" height="18" viewBox="0 0 18 18"><path d="M3.6 9.2L7.4 13L14.4 5.2" fill="none" stroke="#fff" stroke-width="2.2"/></svg>
<div style="left:1160.8px;top:556px;width:17.8px;height:17.5px;background:#dc5a7d;border-radius:2px;"></div><svg style="left:1160.8px;top:556px" width="18" height="18" viewBox="0 0 18 18"><path d="M4.4 4.2L13.6 13.6M13.6 4.2L4.4 13.6" fill="none" stroke="#fff" stroke-width="2.2"/></svg><span class="t" style="left:1090.4px;top:555.0px;font-size:13px;color:#000;transform:scaleX(0.8846);">OK</span><span class="t" style="left:1185px;top:555.5px;font-size:13.5px;color:#000;transform:scaleX(0.7052);">キャンセル</span>
<div style="left:942px;top:54px;width:321px;height:489px;background:#f5efd6;"></div>
<div style="left:942px;top:54px;width:1.4px;height:489px;background:#b4b4b4;"></div>
<div style="left:1262px;top:54px;width:1px;height:55px;background:#d8d8d8;"></div>
<div style="left:943.4px;top:54px;width:319px;height:1px;background:#d6d6d6;"></div>
<div style="left:945px;top:57px;width:315px;height:29px;background:#c38e00;"></div><svg style="left:949px;top:65.2px" width="12" height="12" viewBox="0 0 12 12"><circle cx="6" cy="6" r="5.9" fill="#fbf6e6"/><path d="M3 4.6L6 7.8L9 4.6" fill="none" stroke="#c38e00" stroke-width="1.9"/></svg><span class="t" style="left:966.4px;top:62.6px;font-size:13px;color:#fff;transform:scaleX(0.9456);">名前</span>
<div style="left:943.4px;top:86.8px;width:319px;height:1.6px;background:#a9a9a9;"></div><span class="t" style="left:947.2px;top:89.8px;font-size:13px;color:#000;transform:scaleX(0.9937);">standard_A</span><svg style="left:1247px;top:92px" width="14" height="14" viewBox="0 0 14 14"><g transform="rotate(45 7 7)"><rect x="4.2" y="-1.2" width="5.6" height="8.4" rx=".8" fill="#a0a0a0"/><polygon points="4.2,8 9.8,8 7,12.6" fill="#a0a0a0"/></g><rect x="0.4" y="11.6" width="6" height="1.4" fill="#a0a0a0"/></svg>
<div style="left:943.4px;top:108px;width:319px;height:2px;background:#a0a0a0;"></div>
<div style="left:1245.5px;top:110px;width:17.5px;height:433px;background:#f0f0f0;"></div>
<div style="left:1245px;top:110px;width:1px;height:433px;background:#a9a9a9;"></div>
<div style="left:1247.5px;top:234.5px;width:14.5px;height:76.5px;background:#cdcdcd;"></div><svg style="left:1250.5px;top:115.5px" width="8" height="6" viewBox="0 0 8 6"><path d="M1 5L4.0 1.5L7 5" fill="none" stroke="#404040" stroke-width="2.1"/></svg><svg style="left:1250.5px;top:531.5px" width="8" height="6" viewBox="0 0 8 6"><path d="M1 1L4.0 4.5L7 1" fill="none" stroke="#404040" stroke-width="2.1"/></svg>
<div style="left:943.4px;top:129px;width:301.6px;height:1px;background:#c4c4c4;"></div>
<div style="left:943.4px;top:149px;width:301.6px;height:1px;background:#a9a9a9;"></div><span class="t" style="left:946.2px;top:110.3px;font-size:13.5px;color:#000;transform:scaleX(0.8191);">サイズY</span><span class="t" style="left:1116.8px;top:110.6px;font-size:13px;color:#000;transform:scaleX(0.9608);">1.285952</span><svg style="left:1229.2px;top:112.2px" width="13.6" height="13.6" viewBox="0 0 13 13"><circle cx="6.5" cy="6.5" r="6.45" fill="#a2a2a2"/><polygon points="6.5,2 9.8,5.4 3.2,5.4" fill="#f5efd6"/><polygon points="6.5,11 9.8,7.6 3.2,7.6" fill="#f5efd6"/></svg><span class="t" style="left:946.2px;top:130.3px;font-size:13.5px;color:#000;transform:scaleX(0.8025);">サイズZ</span><span class="t" style="left:1116.8px;top:130.6px;font-size:13px;color:#000;transform:scaleX(0.8694);">0</span><svg style="left:1229.2px;top:133.2px" width="13.6" height="13.6" viewBox="0 0 13 13"><circle cx="6.5" cy="6.5" r="6.45" fill="#a2a2a2"/><polygon points="6.5,2 9.8,5.4 3.2,5.4" fill="#f5efd6"/><polygon points="6.5,11 9.8,7.6 3.2,7.6" fill="#f5efd6"/></svg>
<div style="left:1110px;top:110px;width:1px;height:39px;background:#a9a9a9;"></div>
<div style="left:945px;top:152px;width:298px;height:29px;background:#c38e00;"></div><svg style="left:949px;top:160.2px" width="12" height="12" viewBox="0 0 12 12"><circle cx="6" cy="6" r="5.9" fill="#fbf6e6"/><path d="M3 4.6L6 7.8L9 4.6" fill="none" stroke="#c38e00" stroke-width="1.9"/></svg><span class="t" style="left:966.4px;top:157.6px;font-size:13px;color:#fff;transform:scaleX(0.8176);">モーション設定</span>
<div style="left:943.4px;top:182.6px;width:301.6px;height:1px;background:#a9a9a9;"></div>
<div style="left:943.4px;top:183.6px;width:301.6px;height:19.6px;background:#e8e8e8;"></div><span class="t" style="left:947.0px;top:184.3px;font-size:12.6px;color:#a0a0a0;transform:scaleX(0.8100);">モーション名</span><span class="t" style="left:1116px;top:184.4px;font-size:13px;color:#a0a0a0;transform:scaleX(1.0032);">sb_chara_000</span>
<div style="left:943.4px;top:203.2px;width:301.6px;height:1px;background:#a9a9a9;"></div>
<div style="left:1110px;top:183.6px;width:1px;height:154px;background:#a9a9a9;"></div><span class="t" style="left:946.5px;top:261.5px;font-size:13.5px;color:#000;transform:scaleX(0.7437);">モーション</span>
<div style="left:1111px;top:206px;width:128px;height:128px;background:#4b4b4b;"></div><svg style="left:1111px;top:206px" width="128" height="128" viewBox="1111 206 128 128"><path d="M1166 250L1154.6 255" stroke="#b2a8c6" stroke-width="3.6"/><path d="M1155.4 254.6L1143 261" stroke="#9c5a3a" stroke-width="3.2" stroke-linecap="round"/><path d="M1184.6 247.8L1193 245.6" stroke="#b2a8c6" stroke-width="3.6"/><path d="M1192.4 245.8L1207.6 245.4" stroke="#9c5a3a" stroke-width="3.2" stroke-linecap="round"/><path d="M1165.6 276L1186 275L1184 298L1178.6 298L1177 284L1174.4 298L1167.6 298Z" fill="#363634"/><path d="M1167.6 297L1174.4 297L1172.6 314L1169 315.6L1168.6 308Z" fill="#77746a"/><path d="M1178.6 296L1184 296L1182.6 311L1179.6 312.6L1179 305Z" fill="#77746a"/><path d="M1167.4 298H1174.6M1178.4 297.4H1184.2" stroke="#a88838" stroke-width="1.2"/><path d="M1166.6 247L1184 245L1186.4 272L1176 277.6L1165 273.6Z" fill="#5878b4"/><path d="M1166 256L1180 254" stroke="#8a5a44" stroke-width="1.2"/><path d="M1165 266Q1176 273 1186.4 266.6L1186.4 270.6Q1176 277 1165 270.6Z" fill="#8a4e3c"/><path d="M1176 248L1176.6 266" stroke="#c8c0a0" stroke-width="1"/><ellipse cx="1178" cy="243" rx="5.6" ry="4.6" fill="#f4ece8"/><path d="M1165 235Q1164 225.4 1174 224Q1184.6 223.6 1185.4 233.4Q1185.6 239 1183.6 240.6L1181 238.6L1174 239.6L1170.6 242.6L1167.4 241.4Q1165.2 239 1165 235Z" fill="#b4664a"/><path d="M1166.8 232Q1168 226.4 1175 225.6Q1170.4 229 1169.8 235Z" fill="#c47a5a"/></svg><svg style="left:1216px;top:289px" width="28" height="28" viewBox="0 0 28 28"><rect x="0" y="0" width="28" height="28" rx="3" fill="#fff"/><rect x="10.2" y="2.0" width="2.4" height="2.4" fill="#666"/><rect x="2.4" y="5.0" width="2.4" height="2.4" fill="#666"/><rect x="18.2" y="5.0" width="2.4" height="2.4" fill="#666"/><rect x="6.2" y="7.0" width="2.4" height="2.4" fill="#666"/><rect x="10.2" y="6.0" width="2.4" height="2.4" fill="#666"/><rect x="14.1" y="7.0" width="2.4" height="2.4" fill="#666"/><rect x="10.2" y="10.0" width="2.4" height="2.4" fill="#666"/><rect x="11.0" y="13.8" width="2.4" height="2.4" fill="#666"/><rect x="7.2" y="15.9" width="2.4" height="2.4" fill="#666"/><rect x="4.2" y="20.0" width="2.4" height="2.4" fill="#666"/><rect x="15.6" y="15.7" width="2" height="1.5" fill="#666"/><rect x="19" y="18" width="1.6" height="1.4" fill="#666"/><path d="M24.6 15.4V20.6Q24.6 23.2 22 23.2H15.4M18.6 19.8L15 23.2L18.6 26.6" fill="none" stroke="#5a5a5a" stroke-width="2.2"/></svg><svg style="left:1230px;top:321px" width="13" height="12" viewBox="0 0 13 12"><path d="M0.4 6H11.4M6.6 1L11.6 6L6.6 11" fill="none" stroke="#a2a2a2" stroke-width="2"/></svg>
<div style="left:943.4px;top:336.4px;width:301.6px;height:1px;background:#c4c4c4;"></div>
<div style="left:945px;top:339px;width:298px;height:29px;background:#c38e00;"></div><svg style="left:949px;top:347.2px" width="12" height="12" viewBox="0 0 12 12"><circle cx="6" cy="6" r="5.9" fill="#fbf6e6"/><path d="M3 4.6L6 7.8L9 4.6" fill="none" stroke="#c38e00" stroke-width="1.9"/></svg><span class="t" style="left:966.4px;top:344.6px;font-size:13px;color:#fff;transform:scaleX(0.8096);">使われているマテリアル</span>
<div style="left:943.4px;top:370px;width:301.6px;height:1px;background:#a9a9a9;"></div>
<div style="left:943.4px;top:371px;width:301.6px;height:20px;background:#e8e8e8;"></div><span class="t" style="left:946.9px;top:371.7px;font-size:12.6px;color:#a0a0a0;transform:scaleX(0.8256);">マテリアル名1</span><span class="t" style="left:1116px;top:371.6px;font-size:13px;color:#a0a0a0;transform:scaleX(1.0201);">standard_A(sb_c...</span>
<div style="left:943.4px;top:391px;width:301.6px;height:1px;background:#a9a9a9;"></div><span class="t" style="left:946.4px;top:450.1px;font-size:13.5px;color:#000;transform:scaleX(0.7424);">マテリアル1</span>
<div style="left:1111px;top:394px;width:128px;height:128px;background:#4b4b4b;"></div><svg style="left:1111px;top:394px" width="128" height="128" viewBox="1111 394 128 128"><defs><radialGradient id="sphg" cx=".5" cy=".5" r=".5"><stop offset="0" stop-color="#fff"/><stop offset=".93" stop-color="#fff"/><stop offset="1" stop-color="#e8c8b4"/></radialGradient><linearGradient id="darkg" x1="0" y1="0" x2="1" y2=".3"><stop offset="0" stop-color="#3c3634"/><stop offset=".45" stop-color="#2c2826"/><stop offset="1" stop-color="#3a302c"/></linearGradient><clipPath id="sphc"><circle cx="1175" cy="458" r="37.3"/></clipPath></defs><circle cx="1175" cy="458" r="37.4" fill="url(#sphg)"/><g clip-path="url(#sphc)"><g style="filter:blur(.5px)"><polygon points="1144.5,457.4 1169.2,428.6 1175.4,426.6 1181.5,421.4 1186.7,415.3 1221.6,423.5 1221.6,454.3 1210.9,460.1 1181.5,470.4 1178.9,474.1 1161.0,473.3 1157.9,467.1" fill="url(#darkg)"/><polygon points="1176.4,427.2 1185.0,431.7 1199.0,451.3 1193.9,465.9 1190.0,453.3 1183.0,437.9" fill="#fff"/><polygon points="1178.9,431.7 1186.7,449.2 1190.4,465.0 1191.6,465.0 1188.3,449.2" fill="#5a4e4a"/><polygon points="1169.8,428.8 1174.3,425.6 1183.0,422.7 1186.7,424.7 1178.9,427.2 1174.3,430.1" fill="#f4e0d4"/></g></g></svg><svg style="left:1216px;top:477px" width="28" height="28" viewBox="0 0 28 28"><rect x="0" y="0" width="28" height="28" rx="3" fill="#fff"/><circle cx="11.7" cy="11.3" r="9.7" fill="#666"/><polygon points="9.6,4 15.4,9.8 9.6,15.6 3.8,9.8" fill="#fff" opacity=".92"/><polygon points="10.6,6 19,11.4 12.6,19 5.4,12.6" fill="url(#hw)"/><path d="M24.6 14.6V20.6Q24.6 23.2 22 23.2H15.4M18.6 19.8L15 23.2L18.6 26.6" fill="none" stroke="#fff" stroke-width="4.8"/><path d="M24.6 15.4V20.6Q24.6 23.2 22 23.2H15.4M18.6 19.8L15 23.2L18.6 26.6" fill="none" stroke="#5a5a5a" stroke-width="2.2"/></svg><svg style="left:1230px;top:509px" width="13" height="12" viewBox="0 0 13 12"><path d="M0.4 6H11.4M6.6 1L11.6 6L6.6 11" fill="none" stroke="#a2a2a2" stroke-width="2"/></svg>
<div style="left:943.4px;top:524.4px;width:301.6px;height:1px;background:#a9a9a9;"></div>
<div style="left:943.4px;top:525.4px;width:301.6px;height:17.6px;background:#e8e8e8;"></div><span class="t" style="left:946.9px;top:526.5px;font-size:12.6px;color:#a0a0a0;transform:scaleX(0.8256);">マテリアル名2</span><span class="t" style="left:1116px;top:526.5px;font-size:13px;color:#a0a0a0;transform:scaleX(1.0201);">standard_A(sb_c...</span>
<div style="left:1110px;top:371px;width:1px;height:172px;background:#a9a9a9;"></div>
<div style="left:942px;top:543px;width:321px;height:4px;background:#f0f0f0;"></div><svg style="left:920px;top:130px" width="346" height="230" viewBox="920 130 346 230"><path d="M1078.6 340.7C1076.3 341.2 1069.7 342.4 1064.8 343.7C1059.9 345.0 1055.0 347.5 1049.0 348.6C1043.0 349.8 1035.6 350.3 1029.0 350.6C1022.4 350.9 1016.0 350.9 1009.5 350.2C1003.0 349.5 996.8 348.3 989.7 346.7C982.6 345.1 972.8 342.6 967.0 340.8C961.2 339.0 959.0 337.5 955.0 336.0C951.0 334.5 945.6 333.1 943.0 331.8C940.4 330.5 940.2 330.0 939.4 328.2C938.6 326.4 938.5 325.2 938.2 321.0C937.9 316.8 937.8 309.0 937.6 303.0C937.4 297.0 937.4 291.8 937.0 285.0C936.6 278.2 935.8 270.2 935.5 262.0C935.2 253.8 935.1 244.7 935.2 236.0C935.3 227.3 935.8 216.0 936.0 210.0C936.2 204.0 936.0 204.3 936.4 200.0C936.8 195.7 937.6 189.3 938.2 184.0C938.8 178.7 939.4 172.8 940.0 168.4C940.6 164.0 941.0 160.8 941.8 157.6C942.6 154.4 943.8 151.5 944.8 149.2C945.8 146.9 946.5 145.0 947.8 143.8C949.1 142.6 948.4 142.3 952.6 142.0C956.8 141.7 964.3 142.1 973.0 142.0C981.7 141.9 989.0 141.5 1005.0 141.4C1021.0 141.3 1048.2 141.4 1068.7 141.4C1089.2 141.4 1108.5 141.3 1128.0 141.4C1147.5 141.5 1173.3 141.7 1186.0 141.8C1198.7 141.9 1198.6 141.7 1204.0 142.0C1209.4 142.3 1214.4 142.6 1218.4 143.8C1222.4 145.0 1224.8 147.1 1228.0 149.2C1231.2 151.3 1234.8 154.2 1237.6 156.4C1240.4 158.6 1243.0 160.0 1244.8 162.4C1246.6 164.8 1247.4 167.2 1248.4 170.8C1249.4 174.4 1250.1 179.1 1250.8 184.0C1251.5 188.9 1251.9 193.0 1252.5 200.0C1253.1 207.0 1254.0 216.9 1254.6 226.0C1255.2 235.1 1256.3 244.9 1256.2 254.7C1256.1 264.5 1254.5 277.9 1253.7 285.0C1252.9 292.1 1252.3 292.6 1251.4 297.0C1250.5 301.4 1249.5 306.6 1248.4 311.4C1247.3 316.2 1245.9 322.2 1244.8 325.8C1243.7 329.4 1243.0 331.2 1241.8 333.0C1240.6 334.8 1239.9 335.7 1237.6 336.6C1235.3 337.6 1232.6 338.1 1228.0 338.7C1223.4 339.3 1217.0 339.7 1210.0 340.0C1203.0 340.3 1196.0 340.4 1186.0 340.4C1176.0 340.4 1164.3 339.9 1150.0 339.8C1135.7 339.7 1111.7 339.8 1100.0 339.8C1088.3 339.8 1086.7 339.7 1080.0 340.0C1073.3 340.3 1063.3 341.3 1060.0 341.6" fill="none" stroke="#e61a1e" stroke-width="4" stroke-linecap="round" stroke-linejoin="round"/></svg></div></body></html>
